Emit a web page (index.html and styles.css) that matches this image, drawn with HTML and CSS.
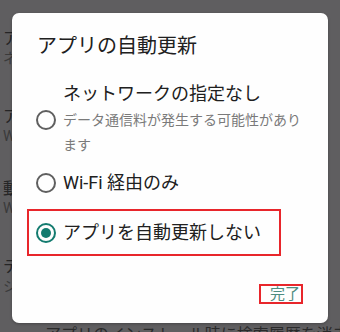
FILE: index.html
```html
<!DOCTYPE html>
<html lang="ja">
<head>
<meta charset="utf-8">
<title>アプリの自動更新</title>
<link rel="stylesheet" href="styles.css">
</head>
<body>
<div class="screen">
  <div class="bg-list">
    <div class="bg-item gap-a">
      <div class="bg-title">アプリのダウンロード設定</div>
      <div class="bg-sub">ネットワークの指定なし</div>
    </div>
    <div class="bg-item gap-b">
      <div class="bg-title">アプリの自動更新</div>
      <div class="bg-sub">Wi-Fi 経由のみ</div>
    </div>
    <div class="bg-item gap-a">
      <div class="bg-title">動画の自動再生</div>
      <div class="bg-sub">Wi-Fi 経由でのみ動画を自動再生</div>
    </div>
    <div class="bg-item gap-c">
      <div class="bg-title">テーマ</div>
      <div class="bg-sub">システムのデフォルト</div>
    </div>
    <div class="bg-foot">アプリのインストール時に検索履歴を消去する</div>
  </div>

  <div class="dialog" role="dialog">
    <div class="dialog-title">アプリの自動更新</div>
    <div class="options">
      <div class="option option-tall">
        <span class="radio"></span>
        <div class="option-text">
          <div class="option-label">ネットワークの指定なし</div>
          <div class="option-sub">データ通信料が発生する可能性があります</div>
        </div>
      </div>
      <div class="option">
        <span class="radio"></span>
        <div class="option-text">
          <div class="option-label"><span class="latin">Wi-Fi</span> 経由のみ</div>
        </div>
      </div>
      <div class="option option-marked">
        <span class="radio radio-on"></span>
        <div class="option-text">
          <div class="option-label">アプリを自動更新しない</div>
        </div>
      </div>
    </div>
    <div class="actions">
      <div class="done">完了</div>
    </div>
  </div>
</div>
</body>
</html>
```

FILE: styles.css
```css
* { box-sizing: border-box; }

html, body {
  margin: 0;
  padding: 0;
  width: 340px;
  height: 332px;
  overflow: hidden;
}

body {
  font-family: Roboto, "Noto Sans CJK JP", sans-serif;
  background: #5f5e60;
}

.screen {
  position: relative;
  width: 340px;
  height: 332px;
  overflow: hidden;
  background: #5f5e60;
}

/* background list seen through the scrim (cut off by the dialog) */
.bg-list {
  padding: 29px 0 0 3px;
  white-space: nowrap;
}
.bg-item {
  height: 38px;
  width: 9px;
  overflow: hidden;
}
.gap-a { margin-bottom: 40px; }
.gap-b { margin-bottom: 34px; }
.gap-c { margin-bottom: 30px; }
.bg-title {
  font-size: 16px;
  line-height: 20px;
  color: #252526;
}
.bg-sub {
  font-size: 14px;
  line-height: 18px;
  color: #3a3a3b;
}
.bg-foot {
  padding-left: 42px;
  font-size: 16px;
  line-height: 20px;
  color: #2a2a2b;
}

/* dialog */
.dialog {
  position: absolute;
  left: 12px;
  top: 13px;
  width: 316px;
  background: #fefefe;
  border-radius: 7px;
  padding: 21px 0 19px 0;
  box-shadow: 0 1px 3px rgba(0,0,0,0.25);
}

.dialog-title {
  padding-left: 25px;
  font-size: 20px;
  line-height: 24px;
  color: #202020;
  margin-bottom: 24px;
}

.options {
  display: flex;
  flex-direction: column;
}

.option {
  display: flex;
  align-items: center;
  height: 50px;
  padding-left: 24px;
}
.option-tall { height: 76px; }

.option-marked {
  margin: 1px 0 0 15px;
  width: 254px;
  height: 47px;
  border: 2px solid #e8262b;
  padding-left: 7px;
}

.radio {
  flex: none;
  width: 20px;
  height: 20px;
  border: 2px solid #5f5f5f;
  border-radius: 50%;
  margin-right: 7px;
  display: flex;
  align-items: center;
  justify-content: center;
}
.radio-on { border-color: #137b6f; }
.radio-on::after {
  content: "";
  width: 10px;
  height: 10px;
  border-radius: 50%;
  background: #137b6f;
}

.option-text {
  display: flex;
  flex-direction: column;
}
.option-label {
  font-size: 18px;
  line-height: 24px;
  color: #202020;
  white-space: nowrap;
}
.latin { font-family: Roboto, sans-serif; }

.option-sub {
  margin-top: 2px;
  width: 241px;
  font-size: 14px;
  line-height: 25px;
  color: #7a7a7a;
}

.actions {
  display: flex;
  justify-content: flex-end;
  padding-right: 25px;
  margin-top: 28px;
}

.done {
  width: 44px;
  height: 20px;
  border: 2px solid #e8262b;
  padding-left: 9px;
  font-size: 15px;
  line-height: 16px;
  color: #4e8c80;
}
```
